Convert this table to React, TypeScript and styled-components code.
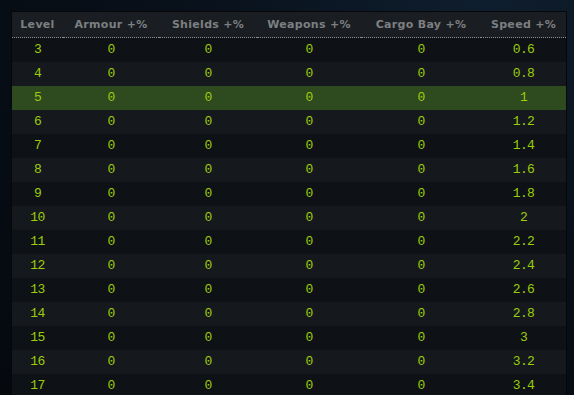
import React from "react";
import styled, { createGlobalStyle } from "styled-components";

const GlobalStyle = createGlobalStyle`
  html, body {
    margin: 0;
    padding: 0;
    height: 100%;
  }
  body {
    background: radial-gradient(ellipse at 85% 0%, #0f1e2e 0%, #08101a 45%, #05090e 100%);
    font-family: "DejaVu Sans", Verdana, sans-serif;
  }
`;

const Page = styled.div`
  padding: 11px 7px 0 11px;
  width: 574px;
  height: 395px;
  box-sizing: border-box;
  overflow: hidden;
`;

const Table = styled.table`
  width: 556px;
  border-collapse: collapse;
  border: 1px solid #05070a;
  table-layout: fixed;
`;

const HeadCell = styled.th<{ $w: number }>`
  width: ${(p) => p.$w}px;
  height: 25px;
  padding: 0;
  background: #1a1e22;
  color: #7d7f81;
  font-size: 11px;
  font-weight: bold;
  letter-spacing: 0.3px;
  text-align: center;
  border-bottom: 1px dotted #8a8c8e;
`;

const Row = styled.tr<{ $shade: "dark" | "light" | "hi" }>`
  height: 24px;
  background: ${(p) =>
    p.$shade === "hi" ? "#2e4b1f" : p.$shade === "light" ? "#15191d" : "#0e1115"};
`;

const Cell = styled.td`
  padding: 0;
  text-align: center;
  color: #9ccc0a;
  font-family: "Liberation Mono", "DejaVu Sans Mono", monospace;
  font-size: 13px;
  letter-spacing: -0.6px;
`;

const columns = [
  { label: "Level", w: 51 },
  { label: "Armour +%", w: 96 },
  { label: "Shields +%", w: 98 },
  { label: "Weapons +%", w: 104 },
  { label: "Cargo Bay +%", w: 120 },
  { label: "Speed +%", w: 85 },
];

const rows = Array.from({ length: 15 }, (_, i) => {
  const level = i + 3;
  const speed = Math.round((level - 2) * 0.2 * 10 + 4) / 10;
  return { level, speed };
});

function App() {
  return (
    <>
      <GlobalStyle />
      <Page>
        <Table>
          <thead>
            <tr>
              {columns.map((c) => (
                <HeadCell key={c.label} $w={c.w}>
                  {c.label}
                </HeadCell>
              ))}
            </tr>
          </thead>
          <tbody>
            {rows.map((r, i) => (
              <Row
                key={r.level}
                $shade={r.level === 5 ? "hi" : i % 2 === 0 ? "dark" : "light"}
              >
                <Cell>{r.level}</Cell>
                <Cell>0</Cell>
                <Cell>0</Cell>
                <Cell>0</Cell>
                <Cell>0</Cell>
                <Cell>{r.speed}</Cell>
              </Row>
            ))}
          </tbody>
        </Table>
      </Page>
    </>
  );
}

export default App;
